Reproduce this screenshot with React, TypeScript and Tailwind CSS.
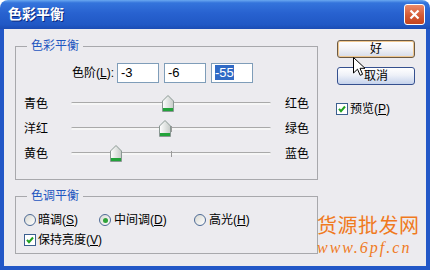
import React from "react";

type SliderRow = { left: string; right: string; value: number };

const ROWS: SliderRow[] = [
  { left: "青色", right: "红色", value: -3 },
  { left: "洋红", right: "绿色", value: -6 },
  { left: "黄色", right: "蓝色", value: -55 },
];

function Thumb() {
  return (
    <svg width="12" height="17" viewBox="0 0 12 17">
      <defs>
        <linearGradient id="thumbFill" x1="0" x2="1" y1="0" y2="0">
          <stop offset="0" stopColor="#ffffff" />
          <stop offset="1" stopColor="#c6cbc8" />
        </linearGradient>
      </defs>
      <path d="M0.5 6 L6 0.5 L11.5 6 V16.5 H0.5 Z" fill="url(#thumbFill)" stroke="#8a9893" />
      <rect x="1" y="13" width="10" height="3" fill="#22a33a" />
    </svg>
  );
}

function Slider({ value }: { value: number }) {
  return (
    <div className="relative w-[200px] h-[17px] flex items-center">
      <div className="w-full h-[3px] rounded-full bg-[#f6f6f6] border-t border-[#a9a9a9]" />
      <div className="absolute left-[100px] top-[6px] w-px h-[6px] bg-[#9a9a9a]" />
      <div className="absolute top-0" style={{ left: value + 100 - 6 }}>
        <Thumb />
      </div>
    </div>
  );
}

function Radio({ checked }: { checked?: boolean }) {
  return (
    <span className="w-[12px] h-[12px] rounded-full border border-[#4d6a95] bg-[linear-gradient(135deg,#d8d8d2,#ffffff)] flex items-center justify-center">
      {checked && <span className="w-[5px] h-[5px] rounded-full bg-[#2fa33a]" />}
    </span>
  );
}

function Check() {
  return (
    <span className="w-[12px] h-[12px] border border-[#3b5f8f] bg-white flex items-center justify-center">
      <svg width="8" height="8" viewBox="0 0 8 8">
        <path d="M1 3.8 L3 6.2 L7 1.5" fill="none" stroke="#21a121" strokeWidth="2" />
      </svg>
    </span>
  );
}

export default function App() {
  return (
    <div className="w-[430px] h-[270px] flex flex-col overflow-hidden text-[12px] text-black font-['Liberation_Sans','Noto_Sans_CJK_SC',sans-serif]">
      {/* title bar */}
      <div className="h-[29px] shrink-0 rounded-t-[8px] bg-[linear-gradient(180deg,#6aa8f0_0%,#3474dc_10%,#2862d0_45%,#2058c5_85%,#1b4cb4_100%)] flex items-center pl-[8px] pr-[5px]">
        <span className="text-white font-bold text-[14px] [text-shadow:1px_1px_0_#0a2a80]">色彩平衡</span>
        <div className="ml-auto w-[21px] h-[21px] rounded-[3px] border border-white bg-[linear-gradient(180deg,#ec8a6a,#d45a35_55%,#c4441f)] flex items-center justify-center">
          <svg width="11" height="11" viewBox="0 0 11 11">
            <path d="M1.5 1.5 L9.5 9.5 M9.5 1.5 L1.5 9.5" stroke="#ffffff" strokeWidth="2.2" />
          </svg>
        </div>
      </div>

      <div className="flex-1 bg-[#2257c7] px-[4px] pb-[4px] flex">
        <div className="flex-1 bg-[#ecebef] flex relative">
          {/* left column */}
          <div className="pl-[11px] pt-[10px] flex flex-col">
            <fieldset className="w-[303px] h-[141px] border border-[#a8a8ac] m-0 p-0">
              <legend className="ml-[11px] px-[4px] leading-[14px] text-[#1f56c0]">色彩平衡</legend>
              <div className="mt-[10px] h-[20px] flex items-center">
                <span className="w-[101px] text-right pr-[3px]">
                  色阶(<span className="underline">L</span>):
                </span>
                <div className="flex gap-[5px]">
                  <div className="w-[42px] h-[20px] border border-[#7f9db9] bg-white pl-[3px] text-[13px] leading-[18px]">-3</div>
                  <div className="w-[42px] h-[20px] border border-[#7f9db9] bg-white pl-[3px] text-[13px] leading-[18px]">-6</div>
                  <div className="w-[42px] h-[20px] border border-[#7f9db9] bg-white pl-[3px] text-[13px] leading-[18px]">
                    <span className="bg-[#316ac5] text-white">-55</span>
                  </div>
                </div>
              </div>
              <div className="mt-[8px]">
                {ROWS.map((r) => (
                  <div key={r.left} className="h-[25px] flex items-center pl-[8px]">
                    <span className="w-[47px]">{r.left}</span>
                    <Slider value={r.value} />
                    <span className="ml-[14px]">{r.right}</span>
                  </div>
                ))}
              </div>
            </fieldset>

            <fieldset className="mt-[9px] w-[303px] h-[65px] border border-[#a8a8ac] m-0 p-0">
              <legend className="ml-[11px] px-[4px] leading-[14px] text-[#1f56c0]">色调平衡</legend>
              <div className="mt-[9px] h-[16px] flex items-center pl-[8px]">
                <div className="w-[75px] flex items-center gap-[2px]">
                  <Radio />
                  <span>暗调(<span className="underline">S</span>)</span>
                </div>
                <div className="w-[95px] flex items-center gap-[3px]">
                  <Radio checked />
                  <span>中间调(<span className="underline">D</span>)</span>
                </div>
                <div className="flex items-center gap-[3px]">
                  <Radio />
                  <span>高光(<span className="underline">H</span>)</span>
                </div>
              </div>
              <div className="mt-[4px] h-[16px] flex items-center pl-[8px] gap-[2px]">
                <Check />
                <span>保持亮度(<span className="underline">V</span>)</span>
              </div>
            </fieldset>
          </div>

          {/* right column */}
          <div className="flex-1 flex flex-col">
            <div className="pl-[19px] pt-[11px] flex flex-col">
              <div className="w-[78px] h-[18px] border border-[#6b5a45] rounded-[3px] bg-[linear-gradient(180deg,#ffffff_0%,#f2f2f5_50%,#d6dbe8_100%)] shadow-[inset_0_0_0_1px_#f0c78e] flex items-center justify-center">
                好
              </div>
              <div className="mt-[9px] w-[78px] h-[18px] border border-[#35508f] rounded-[3px] bg-[linear-gradient(180deg,#ffffff_0%,#eef1f8_45%,#c5d2ec_100%)] flex items-center justify-center">
                取消
              </div>
              <div className="mt-[17px] -ml-[1px] h-[14px] flex items-center gap-[2px]">
                <Check />
                <span>预览(<span className="underline">P</span>)</span>
              </div>
            </div>
            <div className="mt-auto -ml-[1px] pb-[9px] flex flex-col text-[#f07a1e] font-['Noto_Sans_CJK_SC',sans-serif]">
              <span className="text-[20px] leading-[22px] tracking-[0.5px]">货源批发网</span>
              <span className="mt-[3px] text-[16px] leading-[18px] tracking-[2px] italic font-['Liberation_Serif',serif]">www.6pf.cn</span>
            </div>
          </div>

          {/* mouse pointer */}
          <svg className="absolute left-[349px] top-[28px]" width="13" height="20" viewBox="0 0 13 20">
            <path d="M0.5 0.5 L0.5 16 L4.5 12.2 L7.2 18.3 L9.6 17.3 L7 11.3 L12 11.3 Z" fill="#ffffff" stroke="#000000" />
          </svg>
        </div>
      </div>
    </div>
  );
}
